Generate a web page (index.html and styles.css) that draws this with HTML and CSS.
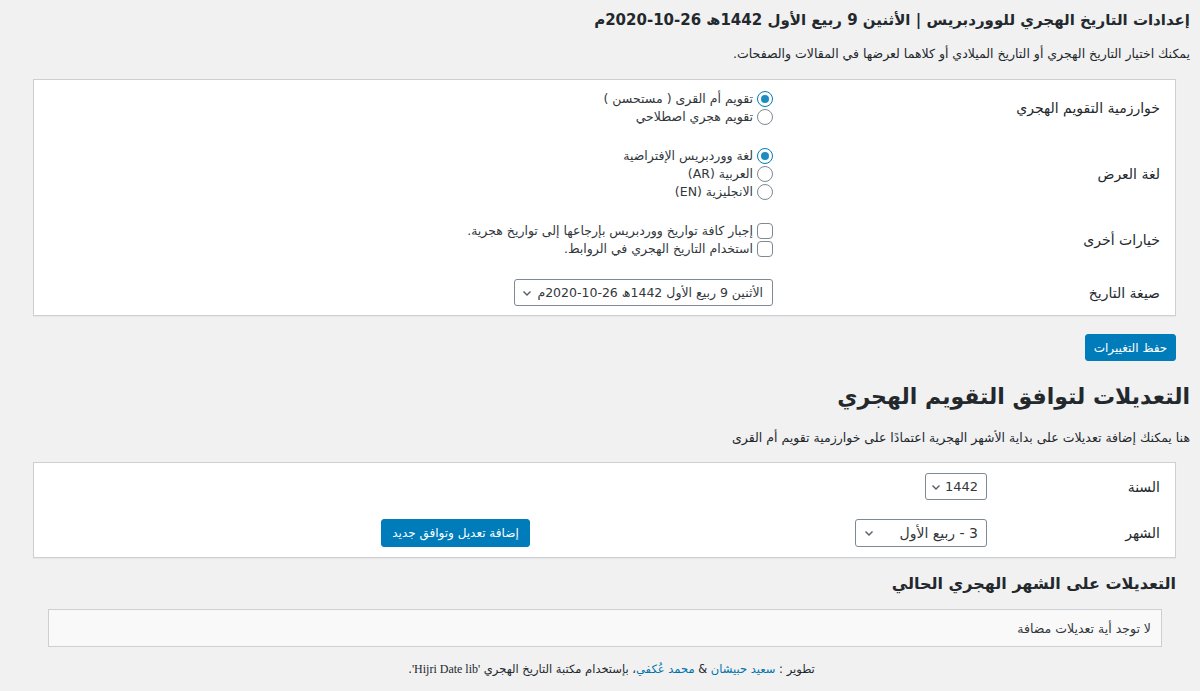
FILE: index.html
```html
<!DOCTYPE html>
<html lang="ar" dir="rtl">
<head>
<meta charset="utf-8">
<title>إعدادات التاريخ الهجري</title>
<link rel="stylesheet" href="styles.css">
</head>
<body>
<div class="wrap">
  <h1 class="page-title">إعدادات التاريخ الهجري للووردبريس | الأثنين 9 ربيع الأول 1442ھ 26-10-2020م</h1>
  <p class="desc">يمكنك اختيار التاريخ الهجري أو التاريخ الميلادي أو كلاهما لعرضها في المقالات والصفحات.</p>

  <div class="card card-settings">
    <div class="row">
      <div class="label">خوارزمية التقويم الهجري</div>
      <div class="controls">
        <div class="opt"><span class="radio checked"></span><span>تقويم أم القرى ( مستحسن )</span></div>
        <div class="opt"><span class="radio"></span><span>تقويم هجري اصطلاحي</span></div>
      </div>
    </div>
    <div class="row">
      <div class="label">لغة العرض</div>
      <div class="controls">
        <div class="opt"><span class="radio checked"></span><span>لغة ووردبريس الإفتراضية</span></div>
        <div class="opt"><span class="radio"></span><span>العربية (AR)</span></div>
        <div class="opt"><span class="radio"></span><span>الانجليزية (EN)</span></div>
      </div>
    </div>
    <div class="row">
      <div class="label">خيارات أخرى</div>
      <div class="controls">
        <div class="opt"><span class="check"></span><span>إجبار كافة تواريخ ووردبريس بإرجاعها إلى تواريخ هجرية.</span></div>
        <div class="opt"><span class="check"></span><span>استخدام التاريخ الهجري في الروابط.</span></div>
      </div>
    </div>
    <div class="row">
      <div class="label">صيغة التاريخ</div>
      <div class="controls">
        <div class="select select-date"><span>الأثنين 9 ربيع الأول 1442ھ 26-10-2020م</span><svg class="chev" width="10" height="10" viewBox="0 0 10 10"><path d="M1.5 3.5 L5 7 L8.5 3.5" fill="none" stroke="#555d66" stroke-width="1.4"/></svg></div>
      </div>
    </div>
  </div>

  <div class="actions"><span class="btn">حفظ التغييرات</span></div>

  <h2 class="section-title">التعديلات لتوافق التقويم الهجري</h2>
  <p class="desc desc2">هنا يمكنك إضافة تعديلات على بداية الأشهر الهجرية اعتمادًا على خوارزمية تقويم أم القرى</p>

  <div class="card card-adjust">
    <div class="row2">
      <div class="label">السنة</div>
      <div class="controls2">
        <div class="select select-year"><span>1442</span><svg class="chev" width="10" height="10" viewBox="0 0 10 10"><path d="M1.5 3.5 L5 7 L8.5 3.5" fill="none" stroke="#555d66" stroke-width="1.4"/></svg></div>
      </div>
    </div>
    <div class="row2">
      <div class="label">الشهر</div>
      <div class="controls2">
        <div class="select select-month"><span>3 - ربيع الأول</span><svg class="chev" width="10" height="10" viewBox="0 0 10 10"><path d="M1.5 3.5 L5 7 L8.5 3.5" fill="none" stroke="#555d66" stroke-width="1.4"/></svg></div>
        <span class="btn btn-add">إضافة تعديل وتوافق جديد</span>
      </div>
    </div>
  </div>

  <h3 class="sub-title">التعديلات على الشهر الهجري الحالي</h3>
  <div class="empty-box">لا توجد أية تعديلات مضافة</div>

  <p class="footer">تطوير : <a href="#">سعيد حبيشان</a> &amp; <a href="#">محمد عُكفي</a>، بإستخدام مكتبة التاريخ الهجري <span class="serif">'Hijri Date lib'</span>.</p>
</div>
</body>
</html>
```

FILE: styles.css
```css
html, body {
  margin: 0;
  padding: 0;
  background: #f1f1f1;
}
body {
  font-family: "DejaVu Sans", "Noto Sans", sans-serif;
  font-size: 13px;
  color: #23282d;
  direction: rtl;
}
.wrap {
  padding: 0 10px 0 33px;
}
.page-title {
  margin: 0;
  padding-top: 8px;
  font-size: 15px;
  line-height: 24px;
  font-weight: bold;
  color: #23282d;
}
.desc {
  margin: 13px 0 0;
  font-size: 12.5px;
  line-height: 18px;
}
.card {
  background: #fff;
  border: 1px solid #ccd0d4;
  box-shadow: 0 1px 1px rgba(0,0,0,0.04);
  margin-right: 14px;
}
.card-settings {
  margin-top: 16px;
  padding: 10px 0 9px;
  display: flex;
  flex-direction: column;
  gap: 21px;
}
.row {
  display: grid;
  grid-template-columns: 402px 1fr;
  align-items: center;
}
.label {
  padding-right: 15px;
  font-size: 14px;
  line-height: 20px;
  color: #23282d;
}
.controls {
  display: flex;
  flex-direction: column;
  align-items: flex-start;
}
.opt {
  display: flex;
  align-items: center;
  gap: 4px;
  height: 18px;
  font-size: 12.5px;
  line-height: 18px;
  color: #32373c;
}
.radio {
  width: 14px;
  height: 14px;
  border: 1px solid #7e8993;
  border-radius: 50%;
  background: #fff;
  display: flex;
  align-items: center;
  justify-content: center;
  flex: none;
}
.radio.checked {
  border-color: #007cba;
}
.radio.checked::after {
  content: "";
  width: 8px;
  height: 8px;
  border-radius: 50%;
  background: #1e8cbe;
}
.check {
  width: 14px;
  height: 14px;
  border: 1px solid #7e8993;
  border-radius: 4px;
  background: #fff;
  flex: none;
}
.select {
  display: flex;
  align-items: center;
  justify-content: space-between;
  box-sizing: border-box;
  height: 28px;
  border: 1px solid #7e8993;
  border-radius: 3px;
  background: #fff;
  padding: 0 8px;
  font-size: 14px;
  color: #32373c;
  white-space: nowrap;
}
.chev { flex: none; }
.select-date {
  width: 259px;
  height: 27px;
  font-size: 12.5px;
  padding: 0 9px 0 7px;
}
.actions {
  display: flex;
  margin: 18px 14px 0 0;
}
.btn {
  display: inline-flex;
  align-items: center;
  justify-content: center;
  box-sizing: border-box;
  height: 27px;
  padding: 0 10px;
  background: #007cba;
  border: 1px solid #007cba;
  border-radius: 3px;
  color: #fff;
  font-size: 12px;
  white-space: nowrap;
}
.actions .btn { width: 91px; }
.section-title {
  margin: 20px 0 0;
  font-size: 22px;
  line-height: 32px;
  font-weight: bold;
}
.desc2 {
  margin-top: 16px;
}
.card-adjust {
  margin-top: 15px;
  padding: 10px 0;
  display: flex;
  flex-direction: column;
  gap: 19px;
}
.row2 {
  display: grid;
  grid-template-columns: 188px 1fr;
  align-items: center;
}
.controls2 {
  display: flex;
  align-items: center;
  gap: 325px;
}
.select-year {
  width: 62px;
  height: 27px;
  padding: 0 8px 0 5px;
  font-size: 13px;
}
.select-month {
  width: 132px;
}
.btn-add {
  width: 149px;
  height: 28px;
}
.sub-title {
  margin: 14px 14px 0 0;
  font-size: 16px;
  line-height: 24px;
  font-weight: bold;
}
.empty-box {
  margin: 13px 28px 0 15px;
  box-sizing: border-box;
  height: 38px;
  padding: 0 10px;
  display: flex;
  align-items: center;
  background: #f9f9f9;
  border: 1px solid #ccd0d4;
  font-size: 12.5px;
  color: #32373c;
}
.footer {
  margin: 13px 0 0;
  text-align: center;
  font-size: 11.5px;
  line-height: 18px;
}
.footer a {
  color: #0073aa;
  text-decoration: none;
}
.serif {
  font-family: "Liberation Serif", serif;
  font-size: 12px;
}
```
